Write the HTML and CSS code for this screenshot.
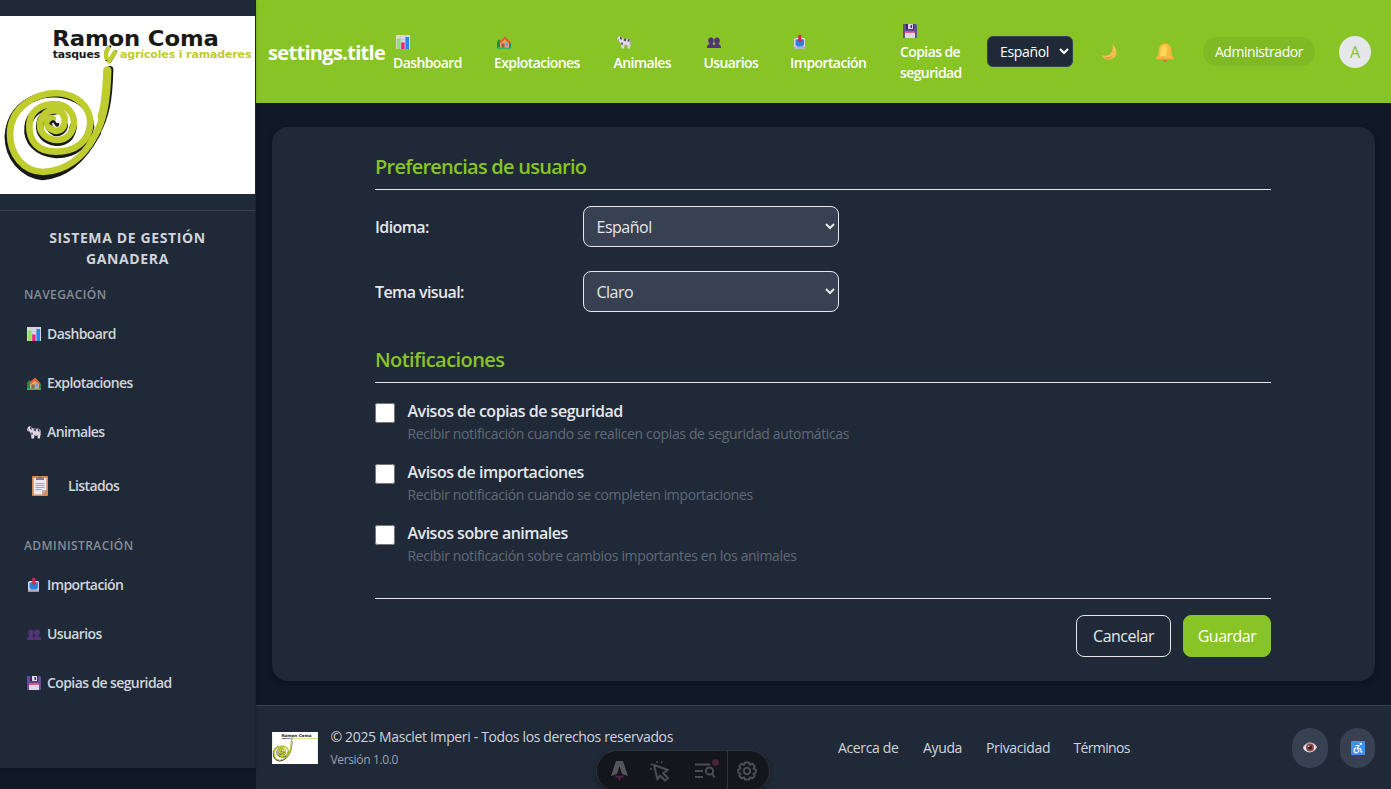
FILE: index.html
```html
<!DOCTYPE html>
<html lang="es">
<head>
<meta charset="utf-8">
<title>Masclet Imperi</title>
<link rel="stylesheet" href="styles.css">
</head>
<body>
<svg class="sprite" width="0" height="0">
  <defs>
    <symbol id="chart" viewBox="0 0 14 14"><path fill="#dcd6e6" d="M0 0h14v14H0z"/><path stroke="#c1b8ce" stroke-width=".6" d="M0 4.500h14M0 9h14M5 0v14M9.300 0v14"/><path fill="#92e35e" d="M1 3.500h3.500V14H1z"/><path fill="#e9277f" d="M5.200 7.500h3.400V14H5.200z"/><path fill="#2389ea" d="M9.500 2H13v12H9.500z"/></symbol>
    <symbol id="house" viewBox="0 0 14 14"><path fill="#258b4b" d="M0 7l2-3 2 2v7H0zM12 8h2v5h-2z"/><path fill="#e4a46c" d="M3 6l5-4 4 4v7H3z"/><path fill="none" stroke="#df612c" stroke-width="2" d="M3 7.500L8 3l5 5"/><path fill="#95604a" d="M4.500 8.500H7.500v4.500H4.500z"/><path fill="#48b5ea" d="M8.500 7.500h2.500V11H8.500z"/><path fill="#38b867" d="M0 12.500h14V14H0z"/></symbol>
    <symbol id="cow" viewBox="0 0 14 14"><path fill="#ded9e7" d="M1 2l2-1 3 2.500 6 .2 1.500 2V10l-.7 3.500h-2L10.500 10H7.500L7 13.500H4.500L4 9 2.500 6.500 0 5z"/><path fill="#574b60" d="M3 1.500l2 1.200L4.500 5 3 4zM7 3.500h2.500l-.8 3-2.200-1zM11 4h1.500v3l-2-1zM4.500 7l1.500 1-.7 2.500-1-1z"/><path fill="#c898ad" d="M0 4l2 .5v2L.2 6zM8 9.500h2V11H8z"/><path fill="none" stroke="#aa9dae" d="M13 5l.4 5"/></symbol>
    <symbol id="users" viewBox="0 0 14 14"><path fill="#523377" d="M4 2.500c1.900 0 3 1.300 2.800 3.300C6.700 7.500 6 8.500 5.200 9c1.100.4 1.800 1 1.800 1.700C7 9.900 7.700 9.400 8.800 9 8 8.500 7.300 7.500 7.200 5.800 7 3.800 8.100 2.500 10 2.500s3 1.300 2.800 3.300C12.700 7.500 12 8.500 11.200 9c1.800.6 2.800 1.500 2.800 3v1H0v-1c0-1.500 1-2.400 2.800-3C2 8.500 1.300 7.500 1.200 5.800 1 3.800 2.100 2.500 4 2.500z"/></symbol>
    <symbol id="inbox" viewBox="0 0 14 14"><path fill="#dcd6e9" d="M2.500 3h8.500L12 4v9.500H1V4z"/><path fill="#b8a8c9" d="M1 11.500h11v2H1z"/><path fill="#2783dc" d="M2.500 4.500h8.500V10L9 11.500H4.500l-2-1.500z"/><path fill="#da234f" d="M5.300 0h3v4.500H10L6.800 7.500l-3-3h1.500z"/></symbol>
    <symbol id="disk" viewBox="0 0 14 14"><path fill="#654c99" d="M0 0h13l1 1v13H0z"/><path fill="#35265a" d="M3 0h8v5.500H3z"/><path fill="#dcd8e6" d="M5 0h5v5H5zM2 7.500h10V14H2z"/><path fill="#483064" d="M7.500 1H9v3H7.500z"/><path fill="#e84471" d="M2 7h10v1.800H2z"/></symbol>
    <symbol id="clipboard" viewBox="0 0 16 20"><rect width="16" height="20" rx="1" fill="#d58a52"/><path fill="#eee8f2" d="M1.700 2h12.600v12L10 18.500H1.700z"/><path fill="#bba8b8" d="M10 18.500V14h4.300z"/><path fill="#857b87" d="M4 1.500h2C6-.2 10-.2 10 1.500h2V4H4z"/><path stroke="#a89eae" d="M3.500 7.500h9M3.500 9.500h9M3.500 11.500h9M3.500 13.500h6"/></symbol>
    <symbol id="moon" viewBox="0 0 16 16"><path fill="#f8c253" d="M11.500.5C17 5 17 13 10 15.200 6 16.300 2 14.800.5 11 4 12.600 8 11.900 10 9c1.800-2.500 2.100-5 1.500-8.500z"/><path fill="#dc9848" d="M2 12.400c4 2 9.300.5 11-2.400-1.500 5-7 6.500-11 2.400z"/><circle cx="12" cy="8" r=".8" fill="#e5a046"/></symbol>
    <symbol id="bell" viewBox="0 0 18 20"><circle cx="9" cy="1.500" r="1.500" fill="#df9d31"/><circle cx="9" cy="18" r="2" fill="#d96e45"/><path fill="#fbba3c" d="M9 1.500C4.500 1.500 3 5 2.700 9L2 14 0 16v2h18v-2l-2-2-.7-5C15 5 13.500 1.500 9 1.500z"/><path fill="#ffd65a" d="M6 4c3-2 5 0 5 4l-1 6H4l1-7z"/><path fill="#ee983e" d="M0 16.500h18V18H0z"/></symbol>
    <symbol id="eye" viewBox="0 0 14 11"><path fill="#efe5ea" d="M0 6C2 1 10-2 14 5c-3 7-11 7-14 1z"/><path fill="none" stroke="#c8acb9" d="M.5 5C3 0 10-1 13.500 5"/><circle cx="7" cy="5.500" r="4" fill="#8b4b4a"/><circle cx="7" cy="5.500" r="2" fill="#321f27"/><circle cx="5.800" cy="4.200" r=".8" fill="#fff"/></symbol>
    <symbol id="wheelchair" viewBox="0 0 14 14"><rect width="14" height="14" rx="1" fill="#438fee"/><g fill="none" stroke="#fff" stroke-width="1.100"><circle cx="9.800" cy="2.800" r=".6" fill="#fff"/><path d="M4.500 4.500l3.500.2-1.800 3h3.500L10 11h1.500M8 4.700L6 7.500M5 6.800c-3.500 2-1.500 5.500 1 4.700 1.400-.5 2.200-1.500 1.700-3"/></g></symbol>
    <symbol id="logo" viewBox="0 48 765 534">
      <path fill="#fff" d="M0 48h765v534H0z"/>
      <g fill="none" stroke-linecap="round" stroke-linejoin="round">
        <g stroke="#191917">
          <path stroke-width="20" d="M330 208C328 300 318 350 290 400"/>
          <path stroke-width="19" d="M293 400C250 480 195 527 128 531C65 525 23 470 23 409C28 340 70 307 110 292"/>
          <path stroke-width="22" d="M272 380C262 432 225 465 168 464C112 460 79 425 84 380C88 338 130 315 165 315M220 380C215 410 200 428 168 427C136 424 117 402 119 377C122 347 140 333 165 333M193 377C190 392 178 400 165 397C150 390 145 380 145 370"/>
          <path stroke-width="7" d="M110 298C145 283 190 287 225 304C260 325 278 350 278 377"/>
          <path stroke-width="8" d="M320 180q-10-30 10-40M330 185l18-30"/>
        </g>
        <g stroke="#bfcc2d">
          <path stroke-width="25" d="M322 211C320 270 315 320 305 350"/>
          <path stroke-width="20" d="M316 290C309 350 307 370 280 415C250 470 200 512 130 516C70 515 30 465 30 400C32 325 100 280 170 279C230 282 271 320 271 370C268 425 225 455 168 455C115 455 86 425 88 375C90 335 120 312 165 312C200 312 223 340 222 370C218 400 200 420 170 420C140 418 120 400 120 375C122 345 140 331 165 331C185 331 196 345 194 368C190 388 180 394 165 392C148 388 139 378 142 364C146 354 152 353 158 356"/>
          <path stroke-width="13" d="M319 174q-3-17 6-30M327 184l18-28"/>
        </g>
        <path stroke="#191917" stroke-width="8" d="M152 370q8-12 14 0t8 2"/>
      </g>
      <g font-family="DejaVu Sans, Verdana, sans-serif" font-weight="bold">
        <text x="157" y="139" font-size="66" textLength="499" lengthAdjust="spacingAndGlyphs" fill="#191917">Ramon Coma</text>
        <text x="158" y="173" font-size="32" textLength="142" lengthAdjust="spacingAndGlyphs" fill="#191917">tasques</text>
        <text x="360" y="173" font-size="32" textLength="394" lengthAdjust="spacingAndGlyphs" fill="#bfcc2d">agrícoles i ramaderes</text>
      </g>
    </symbol>
  </defs>
</svg>

<div class="app">
  <aside class="sidebar">
    <svg class="logo"><use href="#logo"/></svg>
    <div class="brand">SISTEMA DE GESTIÓN<br>GANADERA</div>
    <h2 class="group">NAVEGACIÓN</h2>
    <a class="item"><svg><use href="#chart"/></svg><span>Dashboard</span></a>
    <a class="item"><svg><use href="#house"/></svg><span>Explotaciones</span></a>
    <a class="item"><svg><use href="#cow"/></svg><span>Animales</span></a>
    <a class="item item-large"><svg><use href="#clipboard"/></svg><span>Listados</span></a>
    <h2 class="group group-admin">ADMINISTRACIÓN</h2>
    <a class="item"><svg><use href="#inbox"/></svg><span>Importación</span></a>
    <a class="item"><svg><use href="#users"/></svg><span>Usuarios</span></a>
    <a class="item"><svg><use href="#disk"/></svg><span>Copias de seguridad</span></a>
  </aside>

  <div class="page">
    <header class="topbar">
      <h1 class="title">settings.title</h1>
      <nav class="nav">
        <a class="w-dash"><svg><use href="#chart"/></svg>Dashboard</a>
        <a class="w-exp"><svg><use href="#house"/></svg>Explotaciones</a>
        <a class="w-ani"><svg><use href="#cow"/></svg>Animales</a>
        <a class="w-usr"><svg><use href="#users"/></svg>Usuarios</a>
        <a class="w-imp"><svg><use href="#inbox"/></svg>Importación</a>
        <a class="w-cop"><svg><use href="#disk"/></svg>Copias de<br>seguridad</a>
      </nav>
      <select class="lang"><option>Español</option></select>
      <svg class="moon"><use href="#moon"/></svg>
      <svg class="bell"><use href="#bell"/></svg>
      <span class="role">Administrador</span>
      <span class="avatar">A</span>
    </header>

    <main class="content">
      <section class="card">
        <h2 class="heading">Preferencias de usuario</h2>
        <div class="row"><label>Idioma:</label><select><option>Español</option></select></div>
        <div class="row"><label>Tema visual:</label><select><option>Claro</option></select></div>
        <h2 class="heading heading-notify">Notificaciones</h2>
        <div class="check"><input type="checkbox"><div><b>Avisos de copias de seguridad</b><p>Recibir notificación cuando se realicen copias de seguridad automáticas</p></div></div>
        <div class="check"><input type="checkbox"><div><b>Avisos de importaciones</b><p>Recibir notificación cuando se completen importaciones</p></div></div>
        <div class="check"><input type="checkbox"><div><b>Avisos sobre animales</b><p>Recibir notificación sobre cambios importantes en los animales</p></div></div>
        <div class="actions"><button class="cancel">Cancelar</button><button class="save">Guardar</button></div>
      </section>
    </main>

    <footer class="footer">
      <svg class="mini"><use href="#logo"/></svg>
      <div class="legal"><div class="copy">© 2025 Masclet Imperi - Todos los derechos reservados</div><div class="version">Versión 1.0.0</div></div>
      <nav class="links"><a class="l1">Acerca de</a><a class="l2">Ayuda</a><a class="l3">Privacidad</a><a class="l4">Términos</a></nav>
      <div class="tools"><span><svg class="eye"><use href="#eye"/></svg></span><span><svg><use href="#wheelchair"/></svg></span></div>
    </footer>
  </div>
</div>

<div class="devbar">
  <svg width="130" height="40" fill="none" stroke="#4c4e53" stroke-width="2">
    <path fill="#54565b" stroke="none" d="M19 10h7l5 15-6-2-2.500-8L20 23l-6 2z"/><path fill="#50224c" stroke="none" d="M18 24q4.500 2 9 0l-1 3-2-.5-1.500 3.500-1.500-3.500-2 .5z"/>
    <path stroke-linejoin="round" d="M57 14l14 5-5 3 5 5-3 2.500-5-5-2.500 4z"/><path stroke-width="1.600" d="M53 18h2M54 13l1.500 1M60 10v2M65 10.500l-1 1.500"/>
    <path d="M98 13.500h15M98 20h8M98 26h8"/><circle cx="112.500" cy="20" r="3.600"/><path d="M115 22.500l2.500 4"/><circle cx="118.500" cy="11.500" r="3.500" fill="#452434" stroke="none"/>
  </svg>
  <span class="gear"><svg width="20" height="20" viewBox="0 0 20 20" fill="none" stroke="#4c4e53" stroke-width="2"><path stroke-linejoin="round" d="M8 1.500h4l1 2.200 2.500-1 2.200 2.600-1.200 2.300 2.300 1v3l-2.300 1 1.200 2.200-2.200 2.500-2.500-.9-1 2.200H8l-1-2.200-2.500.9-2.200-2.500 1.200-2.200-2.300-1v-3l2.300-1-1.200-2.300 2.200-2.600 2.500 1z"/><circle cx="10" cy="10" r="3.200"/></svg></span>
</div>
</body>
</html>
```
FILE: styles.css
```css
* { box-sizing: border-box; }
body { margin: 0; height: 789px; overflow: hidden; position: relative; background: #111827; color: #e5e7eb; font-family: "Segoe UI", "Open Sans", "Noto Sans", sans-serif; font-size: 14px; line-height: 21px; letter-spacing: -.35px; white-space: nowrap; }
h1, h2, p { margin: 0; }
svg { display: block; flex: none; }
.sprite { position: absolute; }
.app { display: flex; height: 789px; }
.sidebar { width: 256px; height: 768px; flex: none; background: #1f2937; padding-top: 16px; box-shadow: 0 2px 4px rgba(0,0,0,.15); z-index: 1; border-right: 1px solid #1c2533; }
.logo { width: 255px; height: 178px; }
.brand { margin-top: 16px; border-top: 1px solid #374151; padding-top: 16px; text-align: center; font-weight: 700; color: #d1d5db; letter-spacing: .62px; }
.group { margin: 17px 0 5px 24px; font-size: 12px; line-height: 18px; font-weight: 600; color: #858d99; letter-spacing: .42px; }
.group-admin { margin-top: 26px; }
.item { display: flex; align-items: center; height: 49px; padding-left: 27px; gap: 6px; font-weight: 650; letter-spacing: -.6px; color: #d1d5db; }
.item svg { width: 14px; height: 14px; }
.item-large { height: 55px; padding: 4px 0 0 32px; gap: 20px; }
.item-large svg { width: 16px; height: 20px; }

.page { flex: 1; min-width: 0; display: flex; flex-direction: column; }
.topbar { height: 103px; background: #88c425; display: flex; align-items: center; padding: 0 20px 0 12px; color: #fff; }
.title { width: 125px; font-size: 20px; font-weight: 700; line-height: 28px; padding-top: 3px; letter-spacing: -.68px; }
.nav { display: flex; align-items: center; gap: 32px; width: 594px; font-weight: 650; letter-spacing: -.6px; }
.nav svg { width: 14px; height: 14px; margin: 0 0 3px 3px; }
.nav a { display: block; padding-top: 4px; }
.w-dash { width: 69px; } .w-exp { width: 87.500px; } .w-ani { width: 58px; } .w-usr { width: 54.500px; } .w-imp { width: 78px; } .w-cop { width: 65px; }
select { font: inherit; letter-spacing: inherit; color: inherit; }
.lang { width: 86px; height: 31px; background: #1f2937; border: 1px solid #374151; border-radius: 6px; padding: 4px 0 4px 8px; color: #fff; }
.moon { width: 16px; height: 16px; margin: 1px 0 0 28px; }
.bell { width: 18px; height: 20px; margin: 1px 0 0 39px; }
.role { margin-left: 29px; width: 112px; height: 29px; border-radius: 15px; background: #7fb924; text-align: center; line-height: 30px; letter-spacing: -.45px; }
.avatar { margin-left: 24px; width: 32px; height: 32px; border-radius: 50%; background: #e5e7eb; color: #88c425; font-size: 16px; line-height: 33px; text-align: center; }

.content { padding: 24px 16px; height: 602px; }
.card { height: 554px; padding: 24px 104px 24px 103px; background: #1f2937; border-radius: 16px; box-shadow: 0 2px 6px rgba(0,0,0,.25); font-size: 16px; }
.heading { height: 39px; border-bottom: 1px solid #e5e7eb; margin-bottom: 16px; font-size: 20px; line-height: 32px; font-weight: 600; color: #88c425; letter-spacing: -.75px; }
.heading-notify { margin-top: 32px; margin-bottom: 18px; letter-spacing: -.57px; }
.row { display: flex; align-items: center; height: 41px; margin-bottom: 24px; }
.row label { width: 208px; padding-top: 2px; font-weight: 650; letter-spacing: -.6px; }
.row select { width: 256px; height: 41px; background: #374151; border: 1px solid #e5e7eb; border-radius: 8px; padding: 8px 0 8px 8.500px; letter-spacing: -.5px; }
.check { display: flex; height: 61px; gap: 12px; }
.check > div { padding-left: .5px; }
.check input { width: 20px; height: 20px; margin: 2px 0 0; }
.check b { display: block; font-weight: 650; line-height: 20px; letter-spacing: -.5px; }
.check p { font-size: 14px; line-height: 21px; padding-top: 2px; color: #626a76; letter-spacing: -.36px; }
.actions { margin-top: 14px; border-top: 1px solid #e5e7eb; padding-top: 16px; display: flex; justify-content: flex-end; gap: 12px; }
.actions button { height: 42px; font: inherit; letter-spacing: -.5px; color: #e5e7eb; border: 1px solid #e5e7eb; border-radius: 8px; background: none; padding: 0; }
.actions .cancel { width: 95px; }
.actions .save { width: 88px; background: #88c425; border-color: #88c425; color: #fff; }

.footer { height: 84px; border-top: 1px solid #374151; background: #1f2937; display: flex; align-items: center; padding: 0 16px; color: #d1d5db; }
.mini { width: 46px; height: 32px; }
.legal { width: 507.500px; margin-left: 12.500px; padding-top: 1px; }
.copy { line-height: 23px; }
.version { font-size: 12px; line-height: 23px; color: #9ca3af; }
.links { display: flex; gap: 24px; width: 454px; }
.l1 { width: 61px; } .l2 { width: 39px; } .l3 { width: 63.500px; } .l4 { letter-spacing: -.65px; }
.tools { display: flex; gap: 12px; }
.tools span { width: 36px; height: 40px; border-radius: 18px; background: #374151; display: flex; align-items: center; justify-content: center; }
.tools span:last-child { width: 35px; }
.tools svg { width: 14px; height: 14px; }
.tools .eye { height: 11px; }
.devbar { position: absolute; z-index: 2; left: 596px; top: 750px; width: 174px; height: 42px; border: 1px solid #303339; border-radius: 21px; background: #14161b; display: flex; overflow: hidden; box-shadow: 0 2px 4px rgba(0,0,0,.3); }
.gear { border-left: 1px solid #303339; width: 43px; height: 40px; padding: 10px 9px; }
```
